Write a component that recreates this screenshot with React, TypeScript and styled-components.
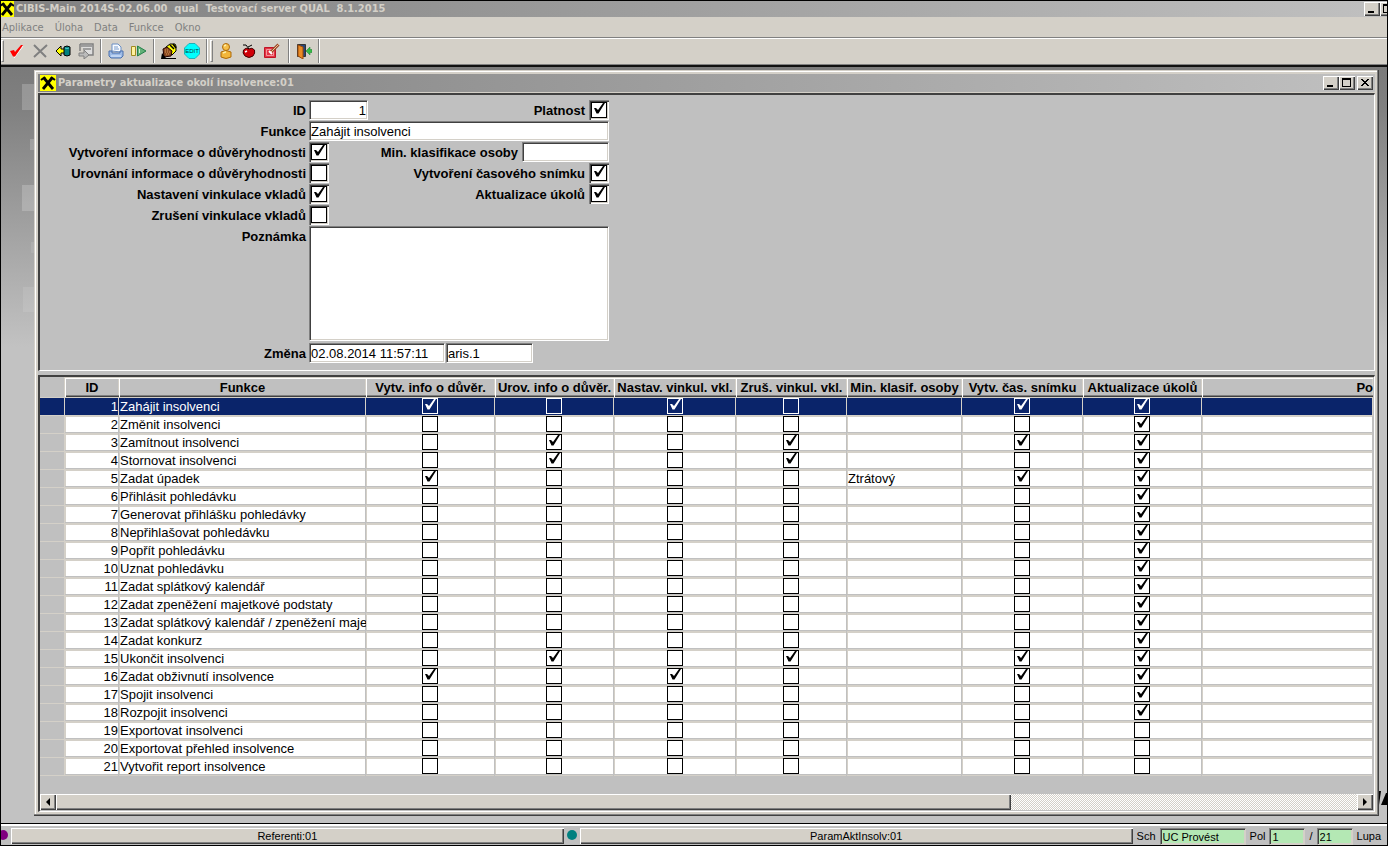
import React from "react";
import styled, { createGlobalStyle, css } from "styled-components";

const face = "#d4d0c8";
const silver = "#c0c0c0";
const shade = "#808080";
const dark = "#404040";
const navy = "#0a246a";

const GlobalStyle = createGlobalStyle`
  * { box-sizing: border-box; }
  body { margin: 0; background: ${face}; }
  button, input, textarea { font: inherit; color: inherit; margin: 0; border-radius: 0; }
  button { padding: 0; border: 0; background: none; }
`;

const raised = css`
  background: ${face};
  box-shadow: inset 1px 1px #fff, inset -1px -1px ${dark}, inset -2px -2px ${shade};
`;

const sunken = css`
  border: 1px solid;
  border-color: ${shade} #fff #fff ${shade};
  box-shadow: inset 1px 1px ${dark}, inset -1px -1px ${face};
`;

const Frame = styled.div`
  display: flex;
  flex-direction: column;
  height: 100vh;
  min-height: 820px;
  border: 1px solid #000;
  background: ${face};
  font: 13px "Liberation Sans", Arial, sans-serif;
  color: #000;
  overflow: hidden;
`;

const TitleBar = styled.header<{ $inner?: boolean }>`
  display: flex;
  flex: none;
  align-items: center;
  gap: 2px;
  height: ${(p) => (p.$inner ? 18 : 16)}px;
  padding: ${(p) => (p.$inner ? "0 2px" : "0")};
  background: linear-gradient(90deg, #808080, #c0c0c0);
  color: ${face};
`;

const Title = styled.h1`
  flex: 1;
  min-width: 0;
  margin: 0;
  font: bold 11px/16px "DejaVu Sans Condensed", "DejaVu Sans", sans-serif;
  font-stretch: condensed;
  white-space: pre;
  overflow: hidden;
`;

const Controls = styled.div<{ $clipped?: boolean }>`
  display: flex;
  flex: none;
  width: ${(p) => (p.$clipped ? "23px" : "auto")};
  overflow: hidden;
`;

const ControlButton = styled.button<{ $apart?: boolean }>`
  ${raised}
  flex: none;
  width: 16px;
  height: 14px;
  margin-left: ${(p) => (p.$apart ? 2 : 0)}px;
  svg { display: block; }
`;

const MenuBar = styled.nav`
  display: flex;
  flex: none;
  gap: 11px;
  height: 21px;
  padding: 0 1px;
  border-bottom: 1px solid ${shade};
`;

const MenuItem = styled.button`
  padding-top: 1px;
  font: 11px/20px "DejaVu Sans Condensed", "DejaVu Sans", sans-serif;
  color: ${shade};
`;

const ToolBar = styled.div`
  display: flex;
  flex: none;
  height: 27px;
  padding-bottom: 1px;
  border-top: 1px solid #fff;
  border-bottom: 1px solid ${shade};
`;

const Grip = styled.span`
  width: 3px;
  margin: 1px 1px 1px 0;
  border: 1px solid;
  border-color: #fff ${shade} ${shade} #fff;
`;

const Divider = styled.span<{ $wide?: boolean }>`
  width: 2px;
  margin: 0 2px 0 ${(p) => (p.$wide ? 5 : 3)}px;
  border-left: 1px solid ${shade};
  border-right: 1px solid #fff;
`;

const ToolButton = styled.button`
  display: grid;
  place-items: center;
  width: 23px;
`;

const Workspace = styled.main`
  display: flex;
  flex: 1;
  flex-direction: column;
  min-height: 0;
  position: relative;
  padding: 3px 8px 7px 33px;
  border-top: 2px solid #101010;
  border-bottom: 1px solid #000;
  background: linear-gradient(#7a7a7a, #808080 40px, #c2c2c2 280px, #c2c2c2);
`;

const Backdrop = styled.svg`
  position: absolute;
  top: 0;
  left: 0;
`;

const Brand = styled.svg`
  position: absolute;
  right: 0;
  bottom: 18px;
`;

const ChildWindow = styled.section`
  position: relative;
  display: flex;
  flex: 1;
  flex-direction: column;
  min-height: 0;
  padding: 4px;
  background: ${face};
  box-shadow: inset -1px -1px ${dark}, inset -2px -2px ${shade}, inset 1px 1px ${face}, inset 2px 2px #fff;
`;

const FormPanel = styled.form`
  display: flex;
  flex: none;
  flex-direction: column;
  gap: 1px;
  margin-top: 1px;
  padding: 5px 0 7px;
  border-style: solid;
  border-width: 2px 1px 1px 2px;
  border-color: ${dark} #fff #fff ${dark};
  background: ${silver};
`;

const FormRow = styled.div`
  display: flex;
  height: 20px;
  gap: 3px;
`;

const NoteRow = styled(FormRow)`
  height: 116px;
`;

const FieldLabel = styled.label<{ $lead?: boolean }>`
  width: ${(p) => (p.$lead ? "266px" : "auto")};
  font-weight: bold;
  line-height: 22px;
  text-align: right;
  white-space: nowrap;
`;

const Controlled = styled.div<{ $split?: boolean }>`
  display: flex;
  justify-content: ${(p) => (p.$split ? "space-between" : "flex-start")};
  gap: 1px;
  width: 300px;
`;

const Pair = styled.div`
  display: flex;
  gap: 4px;
`;

const TextField = styled.input<{ $w: number; $right?: boolean }>`
  ${sunken}
  width: ${(p) => p.$w}px;
  height: 20px;
  padding: 0 1px;
  background: #fff;
  text-align: ${(p) => (p.$right ? "right" : "left")};
  outline: 0;
`;

const NoteField = styled.textarea`
  ${sunken}
  display: block;
  width: 300px;
  height: 115px;
  padding: 1px;
  background: #fff;
  resize: none;
  outline: 0;
`;

const CheckFrame = styled.span<{ $bevel?: boolean; $light?: boolean }>`
  display: inline-grid;
  flex: none;
  vertical-align: top;
  color: ${(p) => (p.$light ? "#fff" : "#000")};
  ${(p) =>
    p.$bevel &&
    css`
      padding: 2px;
      box-shadow: inset 1px 1px ${shade}, inset 2px 2px ${dark}, inset -1px -1px #fff, inset -2px -2px ${face};
      background: #fff;
    `}
  input {
    grid-area: 1 / 1;
    width: 16px;
    height: 16px;
    appearance: none;
    border: 1px solid currentColor;
    background: ${(p) => (p.$light ? navy : "#fff")};
  }
  svg {
    grid-area: 1 / 1;
    display: none;
    pointer-events: none;
  }
  input:checked + svg { display: block; }
`;

const GridPanel = styled.div`
  display: flex;
  flex: 1;
  flex-direction: column;
  min-height: 0;
  padding: 0 1px 1px 0;
  border-style: solid;
  border-width: 2px 1px 1px 2px;
  border-color: ${dark} #fff #fff ${dark};
  background: ${silver};
`;

const Splitter = styled.div`
  flex: none;
  height: 4px;
  background: ${silver};
`;

const GridView = styled.div`
  flex: 1;
  min-height: 0;
  overflow: hidden;
`;

const Grid = styled.table`
  width: 100%;
  min-width: 1200px;
  table-layout: fixed;
  border-collapse: separate;
  border-spacing: 0;
`;

const HeadCell = styled.th<{ $w?: number }>`
  width: ${(p) => (p.$w ? `${p.$w}px` : "auto")};
  height: 21px;
  padding: 0;
  border-top: 1px solid ${face};
  border-bottom: 1px solid ${face};
  background: ${silver};
  box-shadow: inset 1px 1px #fff, inset 0 -1px ${dark}, inset 0 -2px ${shade}, inset -1px 0 ${face};
  line-height: 18px;
  text-align: ${(p) => (p.$w ? "center" : "right")};
  white-space: nowrap;
`;

const CornerCell = styled.td`
  width: 25px;
  padding: 0;
  border-right: 1px solid ${face};
  border-bottom: 1px solid ${face};
`;

const Row = styled.tr<{ $selected?: boolean }>`
  color: ${(p) => (p.$selected ? "#fff" : "#000")};
  td {
    background: ${(p) => (p.$selected ? navy : "#fff")};
    box-shadow: ${(p) =>
      p.$selected
        ? `inset -1px -1px ${face}`
        : `inset -1px 0 ${silver}, inset 0 1px ${face}, inset 0 -1px ${face}, inset 0 -2px ${silver}, inset 1px 0 ${face}`};
  }
`;

const Cell = styled.td<{ $align?: "right" | "center" }>`
  height: 18px;
  padding: ${(p) => (p.$align === "center" ? "0 2px 0 1px" : "0 1px")};
  line-height: 18px;
  text-align: ${(p) => p.$align ?? "left"};
  vertical-align: top;
  white-space: nowrap;
  overflow: hidden;
`;

const Selector = styled.td<{ $selected?: boolean }>`
  && {
    padding: 0;
    background: ${(p) => (p.$selected ? navy : silver)};
    box-shadow: inset -1px -1px ${face};
  }
`;

const ScrollBar = styled.div`
  display: flex;
  flex: none;
  height: 16px;
`;

const ScrollButton = styled.button`
  ${raised}
  display: grid;
  place-items: center;
  width: 16px;
`;

const ScrollThumb = styled.div`
  ${raised}
  flex: 955;
`;

const ScrollTrack = styled.div`
  flex: 346;
  background: conic-gradient(#fff 25%, ${face} 0 50%, #fff 0 75%, ${face} 0) 0 0 / 2px 2px;
`;

const StatusBar = styled.footer`
  display: flex;
  flex: none;
  align-items: center;
  height: 21px;
  padding: 1px 2px 0 0;
  border-top: 2px solid #fff;
  background: ${silver};
  font-size: 11px;
`;

const TaskButton = styled.button`
  ${raised}
  flex: 1;
  height: 16px;
  line-height: 16px;
`;

const Dot = styled.svg<{ $edge?: boolean }>`
  flex: none;
  width: ${(p) => (p.$edge ? 10 : 16)}px;
  height: 16px;
`;

const StatusLabel = styled.label`
  padding: 0 4px;
  white-space: nowrap;
`;

const StatusField = styled.input<{ $w: number }>`
  ${sunken}
  width: ${(p) => p.$w}px;
  height: 17px;
  padding: 1px 1px 0 2px;
  border-color: ${shade} ${face} ${face} ${shade};
  background: #b4e8b4;
  outline: 0;
`;

const Logo = ({ edge }: { edge?: boolean }) => (
  <svg width={edge ? 13 : 16} height="16" viewBox={edge ? "2 0 13 16" : "0 0 16 16"}>
    <path d="M0 0h16v16H0z" fill="#ff0" />
    <path d="M4 3l9 11M12 3L3 14" fill="none" stroke="#000" strokeWidth="2.8" />
    <path d="M1 5l4-3M15 5l-4-3" fill="none" stroke="#000" strokeWidth="2" />
  </svg>
);

const Tick = () => (
  <svg width="16" height="16" viewBox="0 0 16 16">
    <path d="M3 6h2l2 2 5-7h2L7.500 11.500H5.500z" fill="currentColor" />
  </svg>
);

const MinGlyph = () => (
  <svg width="16" height="14"><path d="M4 9h6v2H4z" /></svg>
);
const MaxGlyph = () => (
  <svg width="16" height="14"><path d="M3 2h9v9H3zM4 4v6h7V4z" fillRule="evenodd" /></svg>
);
const CloseGlyph = () => (
  <svg width="16" height="14">
    <path d="M4 3h2v1h1v1h2V4h1V3h2v1h-1v1h-1v1H9v1h1v1h1v1h1v1h-2V9H9V8H7v1H6v1H4V9h1V8h1V7h1V6H6V5H5V4H4z" />
  </svg>
);

const icons: Record<string, React.ReactNode> = {
  Potvrdit: (
    <>
      <path d="M5 15l9-12" stroke="#fff" />
      <path d="M1 8l4-1 1 2 6-7h2L6 13.500H4z" fill="#f00" />
    </>
  ),
  Zrušit: <path d="M2 2l12 12M15 2L2 14" stroke="#808080" strokeWidth="2" />,
  Načíst: (
    <>
      <path d="M1 8l5-5v3h4v4H6v3z" fill="#ff0" stroke="#000" />
      <path d="M9 4q3-2 6 0v8q-3 2-6 0z" fill="#008080" stroke="#000" />
      <path d="M10 5q2 1 4 0" stroke="#5cc" fill="none" />
    </>
  ),
  Okna: (
    <>
      <path d="M2 1h13v11H9M2 1v7" fill="#ddd" stroke="#808080" strokeWidth="1.5" />
      <path d="M3 3h11M5 6h8" stroke="#888" strokeWidth="1.5" />
      <path d="M1 10h5V7l5 5-5 4v-3H1z" fill="#bbb" stroke="#808080" />
    </>
  ),
  Tisk: (
    <>
      <path d="M4 8V1h6l3 3v5z" fill="#f8fbff" stroke="#6b8fc4" />
      <path d="M6 4h4M6 6h5" stroke="#7a9ccc" />
      <path d="M1 8h3v2h8V8h3v5l-2 2H3l-2-2z" fill="#9dbbe6" stroke="#4b70ad" />
      <path d="M3 13h10" stroke="#e4efff" />
    </>
  ),
  Spustit: (
    <>
      <path d="M.5 3.500h4v9h-4z" fill="#fff0a0" stroke="#a08c20" />
      <path d="M6.500 3l8.500 5-8.500 5z" fill="#62b078" stroke="#25824a" />
      <path d="M8.500 6v4" stroke="#c9f0cf" />
    </>
  ),
  Upravit: (
    <>
      <path d="M5 4l4-3h5l1 2v5l-4 4-6-3z" fill="#ff0" stroke="#000" />
      <path d="M9 2l4 4M12 1l3 4" stroke="#000" strokeWidth="1.5" />
      <path d="M2 6l4-2 5 4-1 5-7 1z" fill="#8a4a20" stroke="#200" />
      <path d="M1 10l4 5h10v1H0z" fill="#000" />
      <path d="M4 7h4M4 9h5M5 11h4" stroke="#d8965a" strokeDasharray="1 1" />
    </>
  ),
  Editovat: (
    <>
      <path d="M5 0.500h6l4.500 4.500v6L11 15.500H5L.5 11V5z" fill="#0ff" stroke="#20b0b8" />
      <text x="8" y="10" textAnchor="middle" fontFamily="Liberation Sans, sans-serif" fontSize="6" fill="#044">EDIT</text>
    </>
  ),
  Osoba: (
    <>
      <path d="M3 9q5-3 10 0v5q-5 3-10 0z" fill="#f3b63a" stroke="#ad6b0c" />
      <circle cx="8" cy="4" r="3.5" fill="#f7bf49" stroke="#ad6b0c" />
      <path d="M5 10q2-1 3-1M6 3l2-1" stroke="#fff0a8" fill="none" strokeWidth="1.5" />
    </>
  ),
  Jablko: (
    <>
      <path d="M8 6q3-2 5.500 1 1 3-1.500 6-4 3-8 0-3-3-1.500-6 2.500-3 5.500-1z" fill="#d00008" stroke="#400" />
      <path d="M8 6L5 2 2 2M7 4l4-2" stroke="#000" fill="none" />
      <path d="M4 9l2-1" stroke="#fff" strokeWidth="1.5" />
    </>
  ),
  Zápis: (
    <>
      <path d="M.5 4.500h11v10h-11z" fill="#e23545" stroke="#c01425" />
      <path d="M2.500 6.500h7v6h-7z" stroke="#f5949c" />
      <path d="M14.500 1.500L7 9" stroke="#9a4a2c" strokeWidth="3" />
      <path d="M14.500 1.500L7 9" stroke="#f0c090" />
      <path d="M5 8l3 3" stroke="#fff" strokeWidth="2" />
    </>
  ),
  Konec: (
    <>
      <path d="M1.500 1.500h8v12h-8z" fill="#26457a" stroke="#343434" />
      <path d="M2 2l5 2v12l-5-3z" fill="#ea8b24" stroke="#9b4b0a" />
      <path d="M10 8l4-4v2.500h2v3h-2V12z" fill="#37ba48" stroke="#16802a" strokeWidth=".5" />
    </>
  ),
};

const Tool = ({ name }: { name: string }) => (
  <ToolButton aria-label={name}>
    <svg width="16" height="16" viewBox="0 0 16 16" fill="none">{icons[name]}</svg>
  </ToolButton>
);

const Check = ({ on, id, label, bevel, light }: { on: boolean; id?: string; label?: string; bevel?: boolean; light?: boolean }) => (
  <CheckFrame $bevel={bevel} $light={light}>
    <input type="checkbox" id={id} aria-label={label} defaultChecked={on} />
    <Tick />
  </CheckFrame>
);

/* The last column has no width of its own and takes what is left. */
const columns: [string, number?][] = [
  ["ID", 54],
  ["Funkce", 247],
  ["Vytv. info o důvěr.", 129],
  ["Urov. info o důvěr.", 119],
  ["Nastav. vinkul. vkl.", 122],
  ["Zruš. vinkul. vkl.", 111],
  ["Min. klasif. osoby", 115],
  ["Vytv. čas. snímku", 121],
  ["Aktualizace úkolů", 119],
  ["Po"],
];

/* Flags: create info, settle info, set block, cancel block, snapshot, task update. */
const records: [string, string, string?][] = [
  ["Zahájit insolvenci", "101011"],
  ["Změnit insolvenci", "000001"],
  ["Zamítnout insolvenci", "010111"],
  ["Stornovat insolvenci", "010101"],
  ["Zadat úpadek", "100011", "Ztrátový"],
  ["Přihlásit pohledávku", "000001"],
  ["Generovat přihlášku pohledávky", "000001"],
  ["Nepřihlašovat pohledávku", "000001"],
  ["Popřít pohledávku", "000001"],
  ["Uznat pohledávku", "000001"],
  ["Zadat splátkový kalendář", "000001"],
  ["Zadat zpeněžení majetkové podstaty", "000001"],
  ["Zadat splátkový kalendář / zpeněžení maje", "000001"],
  ["Zadat konkurz", "000001"],
  ["Ukončit insolvenci", "010111"],
  ["Zadat obživnutí insolvence", "101011"],
  ["Spojit insolvenci", "000001"],
  ["Rozpojit insolvenci", "000001"],
  ["Exportovat insolvenci", "000000"],
  ["Exportovat přehled insolvence", "000000"],
  ["Vytvořit report insolvence", "000000"],
];

const RecordRow = ({ index }: { index: number }) => {
  const [name, flags, rating] = records[index];
  const selected = index === 0;
  const flag = (n: number) => (
    <Cell $align="center" key={n}>
      <Check on={flags[n] === "1"} light={selected} label={`${name}: ${columns[n < 4 ? n + 2 : n + 3][0]}`} />
    </Cell>
  );
  return (
    <Row $selected={selected}>
      <Selector $selected={selected} />
      <Cell $align="right">{index + 1}</Cell>
      <Cell>{name}</Cell>
      {[0, 1, 2, 3].map(flag)}
      <Cell>{rating}</Cell>
      {[4, 5].map(flag)}
      <Cell />
    </Row>
  );
};

export default function App() {
  return (
    <>
      <GlobalStyle />
      <Frame>
        <TitleBar>
          <Logo edge />
          <Title>{"CIBIS-Main 2014S-02.06.00  qual  Testovací server QUAL  8.1.2015"}</Title>
          <Controls $clipped>
            <ControlButton aria-label="Minimalizovat"><MinGlyph /></ControlButton>
            <ControlButton aria-label="Maximalizovat"><MaxGlyph /></ControlButton>
          </Controls>
        </TitleBar>
        <MenuBar>
          {["Aplikace", "Úloha", "Data", "Funkce", "Okno"].map((m) => <MenuItem key={m}>{m}</MenuItem>)}
        </MenuBar>
        <ToolBar>
          <Grip />
          {["Potvrdit", "Zrušit", "Načíst", "Okna"].map((n) => <Tool key={n} name={n} />)}
          <Divider />
          {["Tisk", "Spustit"].map((n) => <Tool key={n} name={n} />)}
          <Divider />
          {["Upravit", "Editovat"].map((n) => <Tool key={n} name={n} />)}
          <Divider />
          <Grip />
          {["Osoba", "Jablko", "Zápis"].map((n) => <Tool key={n} name={n} />)}
          <Divider $wide />
          <Tool name="Konec" />
          <Divider />
        </ToolBar>

        <Workspace>
          <Backdrop width="34" height="260">
            <path d="M21 17h13v26H21zM29 72h5v11h-5zM21 118h13v26H21z" fill="#fff" opacity=".2" />
            <path d="M30 175h4v11h-4zM22 220h12v25H22z" fill="#fff" opacity=".1" />
          </Backdrop>
          <Brand width="9" height="14">
            <path d="M1 0h2L1 14H0zM8 2l1 0v12H3z" fill="#000" />
          </Brand>
          <ChildWindow>
            <TitleBar $inner>
              <Logo />
              <Title as="h2">Parametry aktualizace okolí insolvence:01</Title>
              <Controls>
                <ControlButton aria-label="Minimalizovat okno"><MinGlyph /></ControlButton>
                <ControlButton aria-label="Maximalizovat okno"><MaxGlyph /></ControlButton>
                <ControlButton aria-label="Zavřít okno" $apart><CloseGlyph /></ControlButton>
              </Controls>
            </TitleBar>

            <FormPanel>
              <FormRow>
                <FieldLabel $lead htmlFor="id">ID</FieldLabel>
                <Controlled $split>
                  <TextField id="id" $w={59} $right defaultValue="1" />
                  <Pair>
                    <FieldLabel htmlFor="valid">Platnost</FieldLabel>
                    <Check bevel on id="valid" />
                  </Pair>
                </Controlled>
              </FormRow>
              <FormRow>
                <FieldLabel $lead htmlFor="fn">Funkce</FieldLabel>
                <TextField id="fn" $w={300} defaultValue="Zahájit insolvenci" />
              </FormRow>
              <FormRow>
                <FieldLabel $lead htmlFor="create">Vytvoření informace o důvěryhodnosti</FieldLabel>
                <Controlled $split>
                  <Check bevel on id="create" />
                  <Pair>
                    <FieldLabel htmlFor="rating">Min. klasifikace osoby</FieldLabel>
                    <TextField id="rating" $w={87} />
                  </Pair>
                </Controlled>
              </FormRow>
              <FormRow>
                <FieldLabel $lead htmlFor="settle">Urovnání informace o důvěryhodnosti</FieldLabel>
                <Controlled $split>
                  <Check bevel on={false} id="settle" />
                  <Pair>
                    <FieldLabel htmlFor="snap">Vytvoření časového snímku</FieldLabel>
                    <Check bevel on id="snap" />
                  </Pair>
                </Controlled>
              </FormRow>
              <FormRow>
                <FieldLabel $lead htmlFor="block">Nastavení vinkulace vkladů</FieldLabel>
                <Controlled $split>
                  <Check bevel on id="block" />
                  <Pair>
                    <FieldLabel htmlFor="tasks">Aktualizace úkolů</FieldLabel>
                    <Check bevel on id="tasks" />
                  </Pair>
                </Controlled>
              </FormRow>
              <FormRow>
                <FieldLabel $lead htmlFor="unblock">Zrušení vinkulace vkladů</FieldLabel>
                <Check bevel on={false} id="unblock" />
              </FormRow>
              <NoteRow>
                <FieldLabel $lead htmlFor="note">Poznámka</FieldLabel>
                <NoteField id="note" />
              </NoteRow>
              <FormRow>
                <FieldLabel $lead htmlFor="changed">Změna</FieldLabel>
                <Controlled>
                  <TextField id="changed" $w={136} defaultValue="02.08.2014 11:57:11" />
                  <TextField aria-label="Změnil" $w={87} defaultValue="aris.1" />
                </Controlled>
              </FormRow>
            </FormPanel>
            <Splitter />
            <GridPanel>
              <GridView>
                <Grid>
                  <thead>
                    <tr>
                      <CornerCell />
                      {columns.map(([name, w]) => <HeadCell key={name} $w={w}>{name}</HeadCell>)}
                    </tr>
                  </thead>
                  <tbody>
                    {records.map((r, i) => <RecordRow key={r[0]} index={i} />)}
                  </tbody>
                </Grid>
              </GridView>
              <ScrollBar>
                <ScrollButton aria-label="Posunout vlevo">
                  <svg width="8" height="8"><path d="M2 4l4-4v8z" /></svg>
                </ScrollButton>
                <ScrollThumb />
                <ScrollTrack />
                <ScrollButton aria-label="Posunout vpravo">
                  <svg width="8" height="8"><path d="M6 4L2 0v8z" /></svg>
                </ScrollButton>
              </ScrollBar>
            </GridPanel>
          </ChildWindow>
        </Workspace>

        <StatusBar>
          <Dot $edge><circle cx="2" cy="7" r="5" fill="#800080" /></Dot>
          <TaskButton>Referenti:01</TaskButton>
          <Dot><circle cx="8" cy="7" r="5" fill="#008080" /></Dot>
          <TaskButton>ParamAktInsolv:01</TaskButton>
          <StatusLabel htmlFor="mode">Sch</StatusLabel>
          <StatusField id="mode" $w={86} defaultValue="UC Provést" />
          <StatusLabel htmlFor="pos">Pol</StatusLabel>
          <StatusField id="pos" $w={36} defaultValue="1" />
          <StatusLabel htmlFor="total">/</StatusLabel>
          <StatusField id="total" $w={36} defaultValue="21" />
          <StatusLabel as="span">Lupa</StatusLabel>
        </StatusBar>
      </Frame>
    </>
  );
}
